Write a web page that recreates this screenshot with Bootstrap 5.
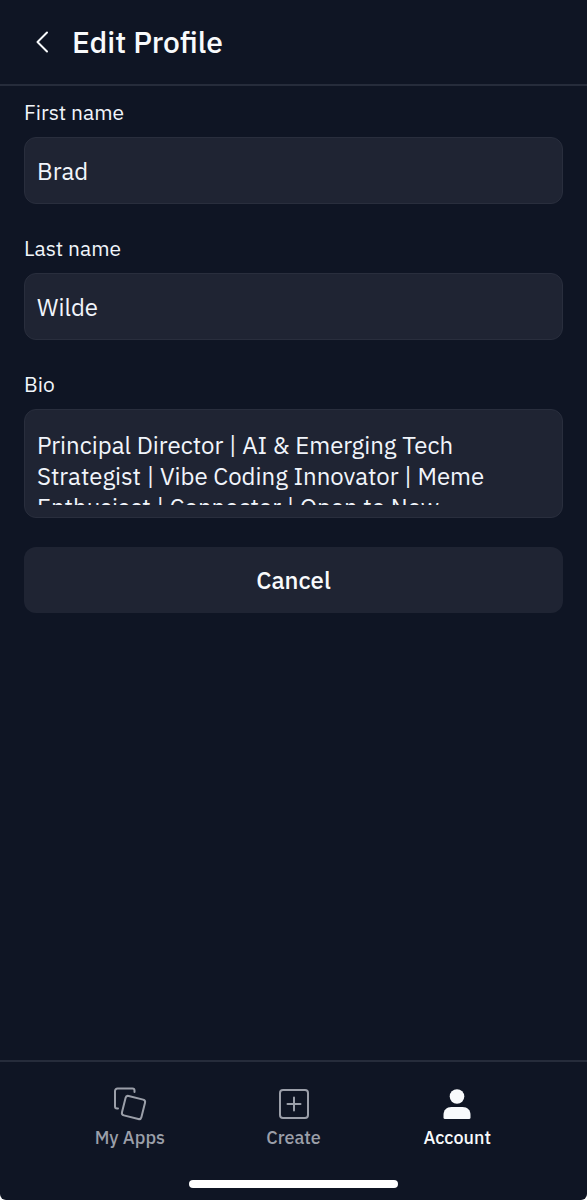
<!DOCTYPE html>
<html lang="en" data-bs-theme="dark">
<head>
<meta charset="utf-8">
<meta name="viewport" content="width=device-width, initial-scale=1">
<title>Edit Profile</title>
<link href="https://cdn.jsdelivr.net/npm/bootstrap@5.3.0/dist/css/bootstrap.min.css" rel="stylesheet">
<style>
  html { background: #fff; }
  body {
    --bs-body-color: #f1f5fb;
    --panel: #1f2433;
    --line: #262c3b;
    font-family: "IBM Plex Sans", "Noto Sans", sans-serif;
    background: transparent;
  }
  .screen { background: #0f1524; border-radius: 0 0 6px 6px; }
  .topbar { padding: 18px 32px; border-bottom: 2px solid var(--line); }
  .topbar h1 { font-size: 30px; line-height: 48px; font-weight: 500; color: #f8fafc; }
  .back { width: 20px; height: 48px; color: #f8fafc; }
  .profile-form { padding: 11px 24px; }
  .field { margin-bottom: 29px; }
  .field .form-label { font-size: 21px; line-height: 30px; margin-bottom: 10px; }
  .box, .box:focus {
    background: var(--panel); border: 1px solid #292e3d; border-radius: 12px;
    color: #f1f5fb; font-size: 24px; line-height: 31px;
  }
  input.box { height: 67px; padding: 0 12px; }
  .bio-box { padding: 20px 12px 12px; }
  .bio-box textarea {
    height: 75px; resize: none; overflow: hidden; outline: 0; color: inherit;
  }
  .cancel { height: 66px; border-radius: 12px; background: var(--panel); color: #f8fafc; font-size: 24px; font-weight: 500; }
  .cancel:hover { background: #282e3f; color: #fff; }
  .tabs { padding: 24px 48px 14px; border-top: 2px solid var(--line); }
  .tab { color: #9b9fa9; font-size: 18px; line-height: 24px; font-weight: 500; }
  .tab.active, .tab:hover { color: #f8fafc; }
  .home-area { padding: 16px 0 12px; }
  .home-bar { width: 209px; height: 8px; background: #fff; }
</style>
</head>
<body>
<div class="screen d-flex flex-column min-vh-100">
  <header class="topbar d-flex align-items-center">
    <button type="button" class="back btn p-0 border-0 d-flex align-items-center" aria-label="Back">
      <svg width="20" height="24" viewBox="0 0 20 24" fill="none" stroke="currentColor" stroke-width="2" stroke-linecap="round" stroke-linejoin="round"><path d="M15 2.500 5.500 12 15 21.500"/></svg>
    </button>
    <h1 class="mb-0 ms-3 ps-1">Edit Profile</h1>
  </header>

  <main class="flex-grow-1">
    <form class="profile-form">
      <div class="field">
        <label class="form-label d-block" for="first">First name</label>
        <input class="form-control box shadow-none" id="first" type="text" value="Brad">
      </div>
      <div class="field">
        <label class="form-label d-block" for="last">Last name</label>
        <input class="form-control box shadow-none" id="last" type="text" value="Wilde">
      </div>
      <div class="field">
        <label class="form-label d-block" for="bio">Bio</label>
        <div class="box bio-box">
          <textarea class="d-block w-100 p-0 border-0 bg-transparent" id="bio">Principal Director | AI &amp; Emerging Tech Strategist | Vibe Coding Innovator | Meme Enthusiast | Connector | Open to New</textarea>
        </div>
      </div>
      <button type="button" class="cancel btn w-100 border-0">Cancel</button>
    </form>
  </main>

  <footer>
    <nav class="tabs d-flex text-center" aria-label="Main">
      <a class="tab flex-fill w-100 text-decoration-none" href="#apps">
        <svg class="d-block mx-auto mb-1" width="36" height="36" viewBox="0 0 36 36" fill="none" stroke="currentColor" stroke-width="2" stroke-linecap="round" stroke-linejoin="round"><path d="M6 22.500H5a2 2 0 0 1-2-2V5a2.500 2.500 0 0 1 2.500-2.500H20.500a2 2 0 0 1 2 2V6"/><rect x="11.500" y="11.500" width="20" height="20" rx="2.500" transform="rotate(14 21.500 21.500)"/></svg>
        My Apps
      </a>
      <a class="tab flex-fill w-100 text-decoration-none" href="#create">
        <svg class="d-block mx-auto mb-1" width="36" height="36" viewBox="0 0 36 36" fill="none" stroke="currentColor" stroke-width="2" stroke-linecap="round"><rect x="4" y="4" width="28" height="28" rx="3"/><path d="M18 11.500v13M11.500 18h13"/></svg>
        Create
      </a>
      <a class="tab active flex-fill w-100 text-decoration-none" href="#account" aria-current="page">
        <svg class="d-block mx-auto mb-1" width="36" height="36" viewBox="0 0 36 36" fill="currentColor"><circle cx="18" cy="10.500" r="7.300"/><path d="M4.500 31.500V29c0-5 3-8 8-8h11c5 0 8 3 8 8v2.500q0 1.500-1.500 1.500H6q-1.500 0-1.500-1.500z"/></svg>
        Account
      </a>
    </nav>
    <div class="home-area"><div class="home-bar rounded-pill mx-auto"></div></div>
  </footer>
</div>
<script src="https://cdn.jsdelivr.net/npm/bootstrap@5.3.0/dist/js/bootstrap.bundle.min.js"></script>
</body>
</html>
